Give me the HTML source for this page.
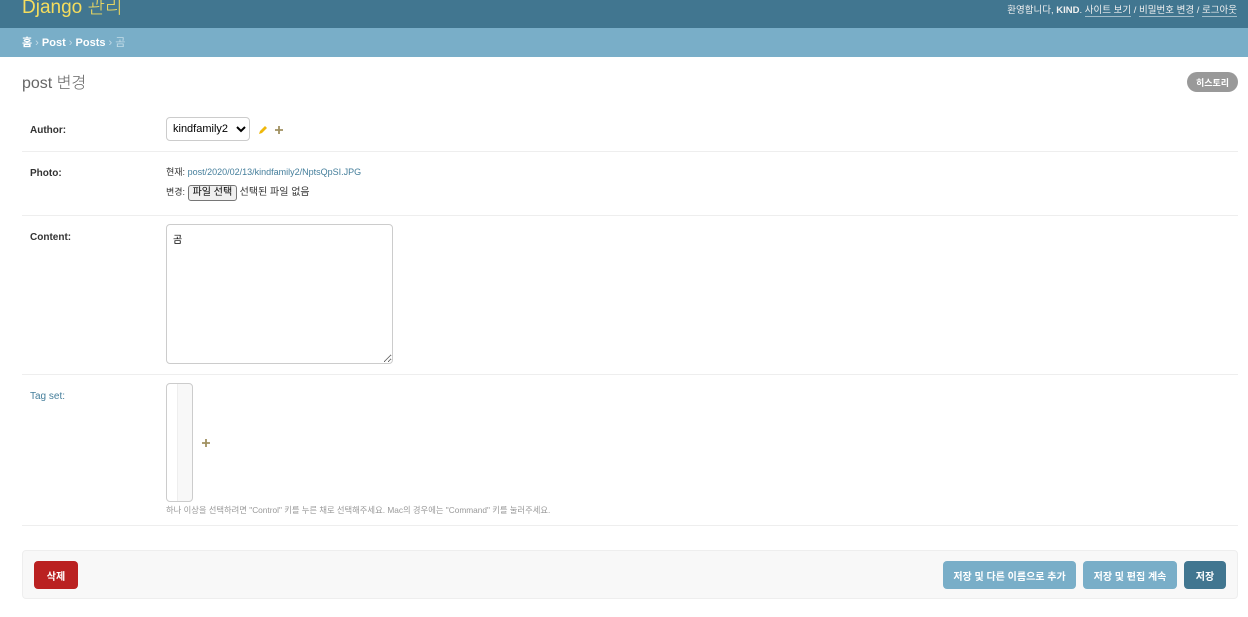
<!DOCTYPE html>
<html><head><meta charset="utf-8"><style>
*{box-sizing:border-box}
body{margin:0;width:1248px;height:617px;overflow:hidden;background:#fff;font-family:"Liberation Sans","Noto Sans CJK KR",sans-serif;color:#333;font-size:13px;position:relative}
#hdr{position:absolute;left:0;top:0;width:1248px;height:28px;background:#417690}
#hdr .t{position:absolute;left:22px;top:-4px;font-size:19px;line-height:24px;color:#f5dd5d;font-weight:300}
#hdr .u{position:absolute;right:11px;top:5px;font-size:9.5px;line-height:12px;color:#f0f0f0}
#hdr .u a{color:#f0f0f0;text-decoration:none;border-bottom:1px solid rgba(255,255,255,.5)}
#bc{position:absolute;left:0;top:28px;width:1248px;height:29px;background:#79aec8;color:#c4dce8;font-size:11px;line-height:13px;padding:9px 22px}
#bc b{color:#fff}
h1{position:absolute;left:22px;top:74px;margin:0;font-size:16px;line-height:20px;font-weight:300;color:#666}
.hist{position:absolute;left:1187px;top:72px;width:51px;height:20px;border-radius:10px;background:#999;color:#fff;font-size:9px;font-weight:bold;display:flex;align-items:center;justify-content:center}
.row{position:absolute;left:22px;width:1216px;border-bottom:1px solid #eee}
.lab{position:absolute;left:8px;font-size:10px;line-height:12px;font-weight:bold;color:#333}
select{position:absolute;left:166px;top:117px;width:84px;height:24px;border:1px solid #ccc;border-radius:4px;background:#fff;font-size:11px;padding:2px 2px;font-family:inherit}
.sm{font-size:9px;line-height:12px;color:#333}
a.l{color:#447e9b;text-decoration:none}
.fb{display:inline-block;border:1px solid #767676;border-radius:3px;background:#efefef;font-size:10px;line-height:12px;padding:1px 4px;color:#000}
textarea{position:absolute;left:166px;top:224px;width:227px;height:140px;border:1px solid #ccc;border-radius:4px;font-family:inherit;font-size:10px;padding:6px;resize:both}
.ms{position:absolute;left:166px;top:383px;width:27px;height:119px;border:1px solid #ccc;border-radius:4px;background:linear-gradient(90deg,#fff 0 10px,#eee 10px 11px,#f8f8f8 11px)}
.sub{position:absolute;left:22px;top:550px;width:1216px;height:49px;border:1px solid #eee;border-radius:4px;background:#f8f8f8}
.btn{position:absolute;top:561px;height:28px;border-radius:4px;color:#fff;font-size:10px;font-weight:bold;display:flex;align-items:center;justify-content:center;white-space:nowrap}
</style></head><body>
<div id="hdr"><div class="t">Django 관리</div>
<div class="u">환영합니다, <b>KIND</b>. <a>사이트 보기</a> / <a>비밀번호 변경</a> / <a>로그아웃</a></div></div>
<div id="bc"><b>홈</b> › <b>Post</b> › <b>Posts</b> › 곰</div>
<h1>post 변경</h1>
<div class="hist">히스토리</div>
<div class="row" style="top:106px;height:46px"><div class="lab" style="top:19px">Author:</div></div>
<select><option>kindfamily2</option></select>
<svg style="position:absolute;left:258px;top:125px" width="10" height="10" viewBox="0 0 10 10"><path d="M1 9l1-3 5-5 2 2-5 5z" fill="#efb80b"/></svg>
<svg style="position:absolute;left:275px;top:126px" width="8" height="8" viewBox="0 0 9 9"><path d="M3.5 0h2v3.5H9v2H5.5V9h-2V5.5H0v-2h3.5z" fill="#a09060"/></svg>
<div class="row" style="top:152px;height:64px"><div class="lab" style="top:16px">Photo:</div></div>
<div class="sm" style="position:absolute;left:166px;top:166px">현재: <a class="l">post/2020/02/13/kindfamily2/NptsQpSI.JPG</a></div>
<div class="sm" style="position:absolute;left:166px;top:185px">변경: <span class="fb">파일 선택</span> <span style="font-size:10px">선택된 파일 없음</span></div>
<div class="row" style="top:216px;height:159px"><div class="lab" style="top:16px">Content:</div></div>
<textarea>곰</textarea>
<div class="row" style="top:375px;height:151px"><div class="lab" style="top:16px;font-weight:normal;color:#447e9b">Tag set:</div></div>
<div class="ms"></div>
<svg style="position:absolute;left:202px;top:439px" width="8" height="8" viewBox="0 0 9 9"><path d="M3.5 0h2v3.5H9v2H5.5V9h-2V5.5H0v-2h3.5z" fill="#a09060"/></svg>
<div style="position:absolute;left:166px;top:505px;font-size:8.3px;line-height:11px;color:#999;white-space:nowrap">하나 이상을 선택하려면 "Control" 키를 누른 채로 선택해주세요. Mac의 경우에는 "Command" 키를 눌러주세요.</div>
<div class="sub"></div>
<div class="btn" style="left:34px;width:44px;background:#ba2121">삭제</div>
<div class="btn" style="left:943px;width:133px;background:#79aec8">저장 및 다른 이름으로 추가</div>
<div class="btn" style="left:1083px;width:94px;background:#79aec8">저장 및 편집 계속</div>
<div class="btn" style="left:1184px;width:42px;background:#417690">저장</div>
</body></html>
